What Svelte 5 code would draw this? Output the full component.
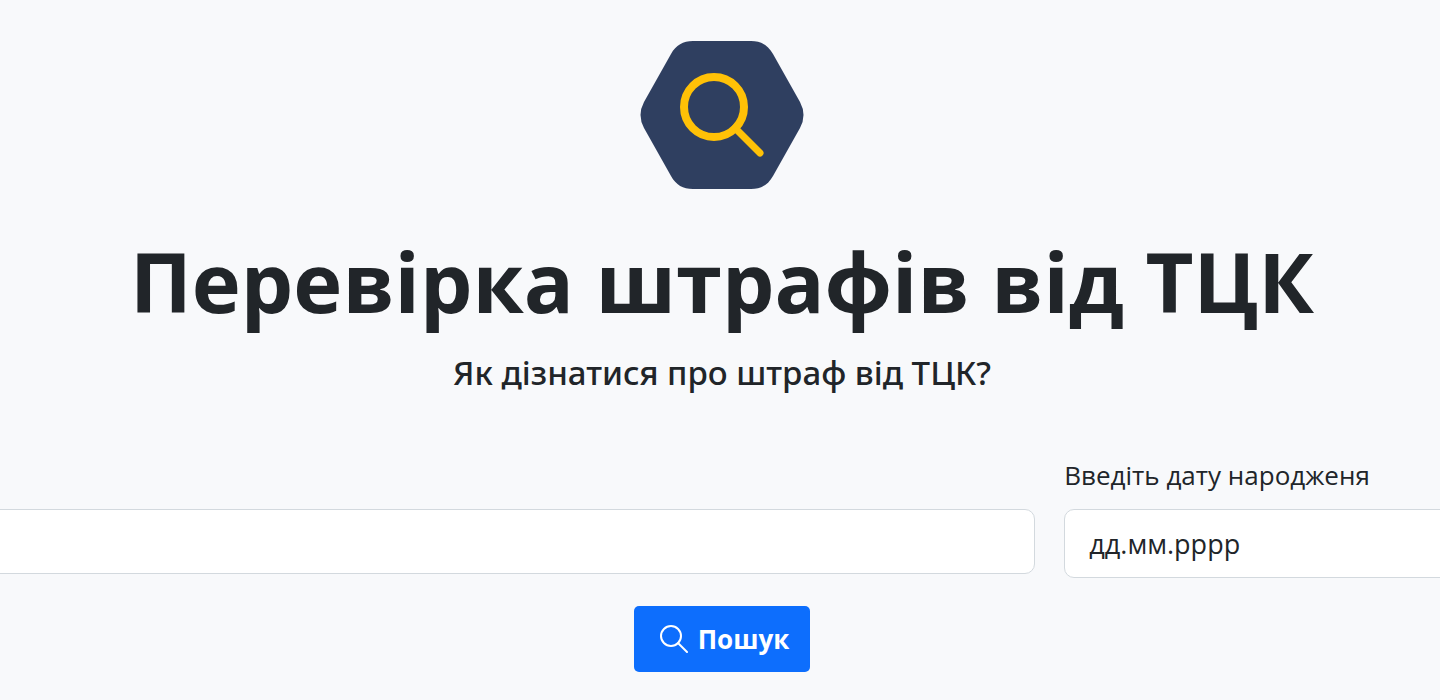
<script lang="ts">
  let query = $state("");
  let birthDate = $state("");
</script>

<main>
  <header>
    <svg class="logo" viewBox="0 0 164 148" aria-hidden="true">
      <path
        d="M53 0H111C121 0 128 4 133 13L160 61Q167 74 160 87L133 135C128 144 121 148 111 148H53C43 148 36 144 31 135L4 87Q-3 74 4 61L31 13C36 4 43 0 53 0Z"
        fill="#2f3f60"
      />
      <circle cx="74" cy="66" r="30" fill="none" stroke="#ffc107" stroke-width="8" />
      <path d="M95 87L120 112" fill="none" stroke="#ffc107" stroke-width="7" stroke-linecap="round" />
    </svg>
    <h1>Перевірка штрафів від ТЦК</h1>
    <h2>Як дізнатися про штраф від ТЦК?</h2>
  </header>

  <form onsubmit={(e) => e.preventDefault()}>
    <div class="fields">
      <div class="field">
        <input class="query" type="text" aria-label="Пошук" bind:value={query} />
      </div>
      <div class="field">
        <label for="birth">Введіть дату народженя</label>
        <input id="birth" class="date" type="text" placeholder="дд.мм.рррр" bind:value={birthDate} />
      </div>
    </div>
    <button type="submit">
      <svg viewBox="0 0 28 28" aria-hidden="true">
        <circle cx="11" cy="11" r="10" />
        <path d="M18 18L27 27" />
      </svg>
      Пошук
    </button>
  </form>
</main>

<style>
  :global(body) {
    margin: 0;
    background: #f8f9fb;
  }
  main {
    min-height: 100vh;
    box-sizing: border-box;
    padding: 41px 0 0 4px;
    overflow: hidden;
    color: #212529;
    font-family: "Segoe UI", "Open Sans", "Noto Sans", sans-serif;
  }
  header {
    display: flex;
    flex-direction: column;
    align-items: center;
    text-align: center;
  }
  .logo {
    width: 164px;
    height: 148px;
  }
  h1 {
    margin: 40px 0 0;
    font-size: 83px;
    font-weight: 700;
    line-height: 104px;
    white-space: nowrap;
  }
  h2 {
    margin: 18px 0 0;
    font-family: "Segoe UI", "Noto Sans", "Open Sans", sans-serif;
    font-size: 33px;
    font-weight: 500;
    line-height: 44px;
  }
  form {
    display: flex;
    flex-direction: column;
    align-items: center;
    margin-top: 60px;
  }
  .fields {
    align-self: stretch;
    display: grid;
    grid-template-columns: 264fr 99fr;
    gap: 29px;
    margin: 0 -20px 0 -24px;
  }
  .field {
    display: flex;
    flex-direction: column;
  }
  label {
    margin-bottom: 14px;
    font-size: 26px;
    line-height: 40px;
  }
  input {
    box-sizing: border-box;
    width: 100%;
    height: 69px;
    padding: 0 24px;
    border: 1px solid #d3d9de;
    border-radius: 10px;
    background: #fff;
    color: #212529;
    font: inherit;
    font-size: 27px;
  }
  input::placeholder {
    color: #212529;
    opacity: 1;
  }
  .query {
    height: 65px;
    margin-top: 54px;
  }
  button {
    display: flex;
    align-items: center;
    gap: 10px;
    height: 66px;
    margin-top: 28px;
    padding: 0 21px 0 26px;
    border: 0;
    border-radius: 5px;
    background: #0d6efd;
    color: #fff;
    font: inherit;
    font-size: 26px;
    font-weight: 700;
  }
  button svg {
    width: 28px;
    height: 28px;
    fill: none;
    stroke: #fff;
    stroke-width: 2;
    stroke-linecap: round;
  }
</style>
